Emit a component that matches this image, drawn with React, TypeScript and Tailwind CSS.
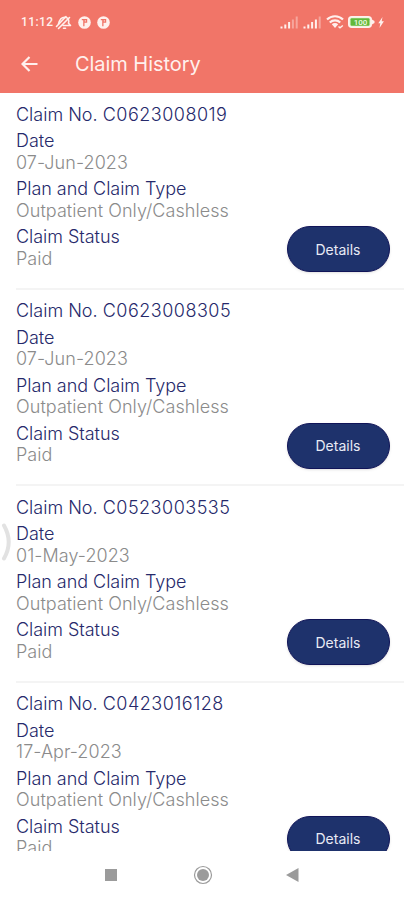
import React from 'react';

interface Claim {
  no: string;
  date: string;
  type: string;
  status: string;
}

const claims: Claim[] = [
  { no: 'C0623008019', date: '07-Jun-2023', type: 'Outpatient Only/Cashless', status: 'Paid' },
  { no: 'C0623008305', date: '07-Jun-2023', type: 'Outpatient Only/Cashless', status: 'Paid' },
  { no: 'C0523003535', date: '01-May-2023', type: 'Outpatient Only/Cashless', status: 'Paid' },
  { no: 'C0423016128', date: '17-Apr-2023', type: 'Outpatient Only/Cashless', status: 'Paid' },
];

function AppBadge() {
  return (
    <svg width="13" height="13" viewBox="0 0 13 13">
      <circle cx="6.5" cy="6.5" r="6.3" fill="#fff0ed" />
      <path d="M3.800 3h5.400v3.800H6.500V10.300H5.200V4.300H3.800z" fill="#f17568" />
      <path d="M6.800 4.300h1v1.300h-1z" fill="#fff0ed" />
    </svg>
  );
}

function Signal({ level }: { level: number }) {
  return (
    <svg width="19" height="13" viewBox="0 0 19 13">
      {[2, 4, 6.5, 9, 12].map((h, i) => (
        <rect key={i} x={0.5 + i * 3.8} y={12.5 - h} width="2" height={h} fill="#fff0ed" opacity={i < level ? 1 : 0.4} />
      ))}
    </svg>
  );
}

function StatusBar() {
  return (
    <div className="flex h-[36px] items-center pt-[8px] pl-[21px] pr-[20px] text-[#fff0ed]">
      <span className="w-[34px] whitespace-nowrap text-[12px] font-medium tracking-[0.4px] font-[Roboto,sans-serif]">11:12</span>
      <svg width="17" height="15" viewBox="0 0 17 15" fill="none" stroke="#fff0ed" strokeWidth="1.6" strokeLinecap="round" strokeLinejoin="round">
        <path d="M3.500 9C4.500 4.500 6 2 10 2.200c3.500.5 4.300 3 3.500 6l2 2.300H8" />
        <path d="M1.500 11.500 11 1.500M3.500 13.500 14.500 2.500" />
        <path d="M8.500 13.300h2" />
      </svg>
      <span className="ml-[6px] flex gap-[6px]">
        <AppBadge />
        <AppBadge />
      </span>
      <div className="ml-auto flex items-center">
        <Signal level={3} />
        <span className="ml-[4px]">
          <Signal level={4} />
        </span>
        <svg className="ml-[4px]" width="18" height="14" viewBox="0 0 18 14" fill="none" stroke="#fff0ed" strokeWidth="2.2">
          <path d="M1 4.500a11.500 11.500 0 0 1 16 0M3.800 7.500a7.500 7.500 0 0 1 10.400 0" />
          <path d="M5.800 9.300a4.600 4.600 0 0 1 6.400 0L9 13z" fill="#fff0ed" stroke="none" />
          <path d="m12.500 11.500 1.500 1.300 2.800-2.300" strokeWidth="1.5" />
        </svg>
        <svg className="ml-[4px]" width="27" height="12" viewBox="0 0 27 12">
          <rect x="0.75" y="0.75" width="22.5" height="10.5" rx="3" fill="#e9f3d8" stroke="#fff0ed" strokeWidth="1.5" />
          <rect x="2.5" y="2.3" width="19" height="7.4" rx="1" fill="#62b83a" />
          <path d="M24 3.500 26.500 5v2L24 8.500z" fill="#fff0ed" />
          <text x="12.5" y="8.9" textAnchor="middle" fontFamily="Roboto, sans-serif" fontSize="8" fontWeight="500" fill="#eefbe4">100</text>
        </svg>
        <svg className="ml-[3px]" width="6" height="11" viewBox="0 0 6 11">
          <path d="M4.500 0 .3 6.200h2L1.500 11 5.900 4.300H3.700z" fill="#fff0ed" />
        </svg>
      </div>
    </div>
  );
}

function Field({ label, value }: { label: string; value: string }) {
  return (
    <div className="mt-[5.2px] leading-[21.4px]">
      <p className="tracking-[-0.04px] text-[#26296b]">{label}</p>
      <p className="tracking-[0.06px] text-[#8b8b8b]">{value}</p>
    </div>
  );
}

function ClaimCard({ claim }: { claim: Claim }) {
  return (
    <div className="h-[196.5px] shrink-0 pl-[16px] text-[18px] font-light">
      <div className="flex h-full justify-between border-b-2 border-[#f4f4f4] pt-[10.5px] pr-[14.5px]">
        <div className="whitespace-nowrap">
          <p className="leading-[21.4px] text-[#26296b]">
            Claim No. <span className="tracking-[0.5px]">{claim.no}</span>
          </p>
          <Field label="Date" value={claim.date} />
          <Field label="Plan and Claim Type" value={claim.type} />
          <Field label="Claim Status" value={claim.status} />
        </div>
        <button className="mb-[15.5px] h-[46px] w-[103px] self-end rounded-full border border-[#101458] bg-[#1e326c] text-[14px] font-normal text-[#e9ebf5] shadow-sm">
          Details
        </button>
      </div>
    </div>
  );
}

export default function App() {
  return (
    <div className="relative flex h-[900px] w-[404px] flex-col overflow-hidden bg-white font-[Inter,sans-serif]">
      <header className="h-[93px] shrink-0 bg-[#f17568]">
        <StatusBar />
        <div className="flex h-[56px] items-center pl-[21px] text-[#fff0ed]">
          <svg width="17" height="16" viewBox="0 0 17 16" fill="none" stroke="currentColor" strokeWidth="2.2">
            <path d="M16.500 8H1.500M8.500 1 1.500 8l7 7" />
          </svg>
          <h1 className="ml-[37px] text-[20px] font-normal tracking-[-0.05px]">Claim History</h1>
        </div>
      </header>

      <main className="flex h-[758px] shrink-0 flex-col overflow-hidden">
        {claims.map((claim) => (
          <ClaimCard key={claim.no} claim={claim} />
        ))}
      </main>

      {/* System navigation */}
      <nav className="flex h-[48px] shrink-0 items-center pl-[105px]">
        <span className="h-[12px] w-[12px] bg-[#9b9b9b]" />
        <svg className="ml-[76px]" width="20" height="20" viewBox="0 0 20 20">
          <circle cx="10" cy="10" r="8.5" fill="none" stroke="#9b9b9b" strokeWidth="1.2" />
          <circle cx="10" cy="10" r="6" fill="#9b9b9b" />
        </svg>
        <svg className="ml-[73px]" width="13" height="14" viewBox="0 0 13 14">
          <path d="M0 7 12.500 0v14z" fill="#9b9b9b" />
        </svg>
      </nav>

      {/* Edge swipe handle */}
      <svg className="absolute left-0 top-[523px]" width="12" height="38" viewBox="0 0 12 38">
        <path d="M4 2.500C10 13 10 25 4 35.500" fill="none" stroke="#e2e2e2" strokeWidth="4" strokeLinecap="round" />
      </svg>
    </div>
  );
}
